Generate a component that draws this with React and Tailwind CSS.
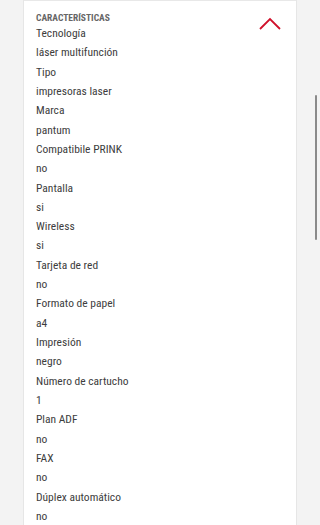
import React from "react";

const items = [
  "Tecnología",
  "láser multifunción",
  "Tipo",
  "impresoras laser",
  "Marca",
  "pantum",
  "Compatibile PRINK",
  "no",
  "Pantalla",
  "si",
  "Wireless",
  "si",
  "Tarjeta de red",
  "no",
  "Formato de papel",
  "a4",
  "Impresión",
  "negro",
  "Número de cartucho",
  "1",
  "Plan ADF",
  "no",
  "FAX",
  "no",
  "Dúplex automático",
  "no",
];

export default function App() {
  return (
    <div
      className="relative w-[320px] h-[525px] overflow-hidden bg-[#f2f2f2] flex"
      style={{ fontFamily: "'Roboto Condensed', Roboto, sans-serif" }}
    >
      <div className="w-[24px] shrink-0 border-r border-[#e6e6e6] bg-[#f3f3f3]" />
      <div className="w-[272px] shrink-0 bg-white border-t border-[#e8e8e8] pl-[12px] pr-[15px] pt-[10px]">
        <div className="flex justify-between items-start">
          <div className="text-[9.5px] font-bold uppercase text-[#666] leading-[14px]">
            Características
          </div>
          <svg width="22" height="13" viewBox="0 0 22 13" className="mt-[6px]">
            <polyline
              points="1,12 11,2 21,12"
              fill="none"
              stroke="#d0112b"
              strokeWidth="1.8"
            />
          </svg>
        </div>
        <div className="-mt-[6px]">
          {items.map((t, i) => (
            <div key={i} className="text-[11.5px] leading-[19.32px] text-[#3d3d3d]">
              {t}
            </div>
          ))}
        </div>
      </div>
      <div className="flex-1 border-l border-[#e6e6e6] bg-[#f3f3f3]" />
      <div className="absolute left-[315px] top-[95px] w-[2px] h-[145px] rounded bg-[#8a8a8a]" />
    </div>
  );
}
